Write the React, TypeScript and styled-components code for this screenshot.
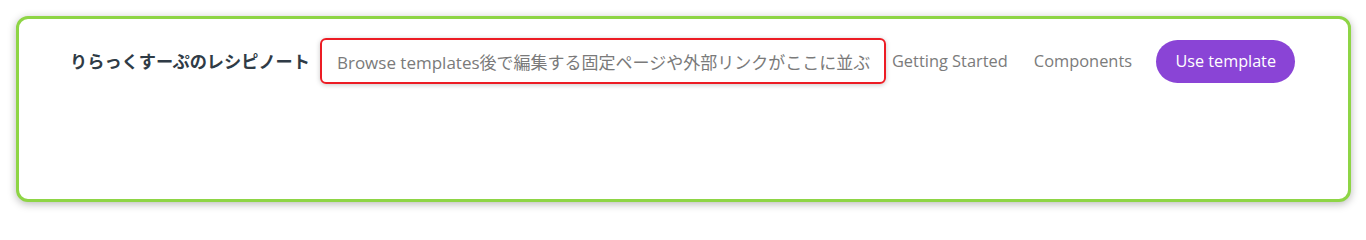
import React from "react";
import styled, { createGlobalStyle } from "styled-components";

const GlobalStyle = createGlobalStyle`
  html, body {
    margin: 0;
    padding: 0;
    background: #ffffff;
  }
  body {
    font-family: "Open Sans", "Noto Sans CJK JP", sans-serif;
  }
`;

const Page = styled.div`
  padding: 16px 15px 17px 16px;
`;

const Frame = styled.div`
  height: 180px;
  border: 3px solid #8ed545;
  border-radius: 12px;
  background: #ffffff;
  box-shadow: 0 2px 9px rgba(0, 0, 0, 0.28);
`;

const Header = styled.header`
  display: flex;
  align-items: center;
  padding: 19px 53px 0 51px;
`;

const Brand = styled.div`
  font-family: "Noto Sans CJK JP", sans-serif;
  font-size: 17.2px;
  font-weight: 700;
  color: #2f3b46;
  white-space: nowrap;
  margin: -2px 10px 0 0;
`;

const SearchBox = styled.div`
  display: flex;
  align-items: center;
  width: 566px;
  height: 46px;
  box-sizing: border-box;
  padding: 0 14px 0 15px;
  border: 2px solid #ec1c24;
  border-radius: 6px;
  box-shadow: 0 1px 5px rgba(0, 0, 0, 0.22);
  font-size: 17px;
  color: #7a7a7a;
  white-space: nowrap;
  overflow: hidden;
`;

const NavLinks = styled.nav`
  display: flex;
  align-items: center;
  gap: 26px;
  margin: -1px 0 0 6px;
`;

const NavLink = styled.a`
  font-size: 16.4px;
  color: #7b7b7b;
  text-decoration: none;
  white-space: nowrap;
`;

const CtaButton = styled.button`
  margin-left: auto;
  height: 43px;
  padding: 0 19px;
  border: none;
  border-radius: 22px;
  background: #8a44d6;
  color: #ffffff;
  font-family: "Open Sans", sans-serif;
  font-size: 16.2px;
  font-weight: 500;
  white-space: nowrap;
`;

export default function App() {
  return (
    <>
      <GlobalStyle />
      <Page>
        <Frame>
          <Header>
            <Brand>りらっくすーぷのレシピノート</Brand>
            <SearchBox>
              Browse templates後で編集する固定ページや外部リンクがここに並ぶ
            </SearchBox>
            <NavLinks>
              <NavLink href="#">Getting Started</NavLink>
              <NavLink href="#">Components</NavLink>
            </NavLinks>
            <CtaButton>Use template</CtaButton>
          </Header>
        </Frame>
      </Page>
    </>
  );
}
